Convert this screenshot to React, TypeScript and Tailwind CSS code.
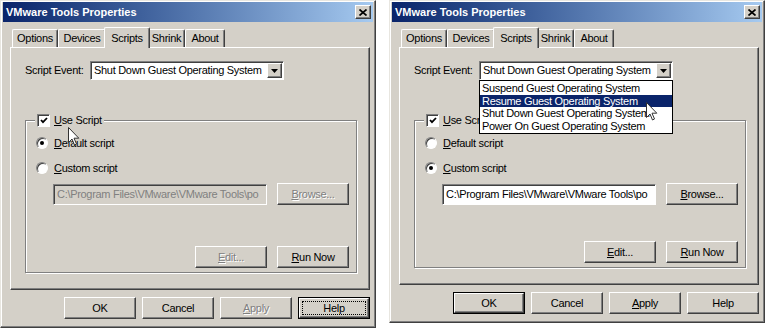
import React from 'react';

const raised =
  'bg-[#d4d0c8] border border-t-white border-l-white border-r-[#404040] border-b-[#404040] shadow-[inset_-1px_-1px_0_#808080]';
const sunken =
  'border border-t-[#808080] border-l-[#808080] border-r-white border-b-white shadow-[inset_1px_1px_0_#404040]';

// label with one underlined accelerator letter
const Label = ({ text, acc }: { text: string; acc?: number }) => {
  if (acc === undefined) return <>{text}</>;
  return (
    <>
      {text.slice(0, acc)}
      <span className="underline underline-offset-[1px]">{text[acc]}</span>
      {text.slice(acc + 1)}
    </>
  );
};

interface ButtonProps {
  text: string;
  acc?: number;
  disabled?: boolean;
  primary?: boolean;
  focused?: boolean;
}

const Button: React.FC<ButtonProps> = ({ text, acc, disabled, primary, focused }) => {
  const tone = disabled ? 'text-[#808080] [text-shadow:1px_1px_0_#ffffff]' : 'text-black';
  return (
    <div className={`w-[72px] h-[22px] flex ${primary || focused ? 'border border-black' : ''}`}>
      <div className={`flex-1 flex ${raised} ${tone} ${focused ? 'p-[2px]' : ''}`}>
        <div
          className={`flex-1 flex items-center justify-center ${focused ? 'border border-dotted border-black' : ''}`}
        >
          <Label text={text} acc={acc} />
        </div>
      </div>
    </div>
  );
};

const Checkbox = () => (
  <div className={`w-[13px] h-[13px] bg-white ${sunken} flex items-center justify-center`}>
    <svg width="8" height="7" viewBox="0 0 8 7">
      <path d="M1 3 L3 5.2 L7 1" stroke="black" strokeWidth="1.8" fill="none" />
    </svg>
  </div>
);

const Radio = ({ checked }: { checked?: boolean }) => (
  <div
    className="w-[12px] h-[12px] rounded-full bg-white border border-t-[#808080] border-l-[#808080] border-r-white border-b-white shadow-[inset_1px_1px_0_#404040] flex items-center justify-center"
  >
    {checked && <div className="w-[4px] h-[4px] rounded-full bg-black" />}
  </div>
);

const Cursor = () => (
  <svg width="12" height="19" viewBox="0 0 12 19">
    <path
      d="M0.5 0.5 L0.5 15.5 L4 12 L6.5 18 L8.5 17 L6 11.2 L10.8 11.2 Z"
      fill="white"
      stroke="#333"
      strokeWidth="1"
    />
  </svg>
);

const Window: React.FC<{ open?: boolean }> = ({ open }) => {
  const options = [
    'Suspend Guest Operating System',
    'Resume Guest Operating System',
    'Shut Down Guest Operating System',
    'Power On Guest Operating System',
  ];
  const tabs: [string, string][] = [
    ['Options', 'w-[46px]'],
    ['Devices', 'w-[48px]'],
    ['Scripts', 'w-[46px]'],
    ['Shrink', 'w-[37px]'],
    ['About', 'w-[40px]'],
  ];

  return (
    <div
      className={`relative flex flex-col bg-[#d4d0c8] border border-t-[#e8e6e0] border-l-[#e8e6e0] border-r-[#404040] border-b-[#404040] shadow-[inset_-1px_-1px_0_#808080,inset_1px_1px_0_#ffffff] ${
        open ? 'w-[376px] h-[323px]' : 'w-[376px] h-[328px]'
      }`}
    >
      {/* title bar */}
      <div className="mx-[2px] mt-[1px] h-[20px] flex items-center justify-between pl-[3px] pr-[2px] bg-linear-to-r from-[#0a246a] to-[#a6caf0]">
        <span className="text-white font-bold text-[11px] tracking-normal">VMware Tools Properties</span>
        <div className={`w-[16px] h-[14px] ${raised} flex items-center justify-center`}>
          <svg width="8" height="7" viewBox="0 0 8 7">
            <path d="M0.5 0.5 L7.5 6.5 M7.5 0.5 L0.5 6.5" stroke="black" strokeWidth="1.7" />
          </svg>
        </div>
      </div>

      <div className="flex-1 flex flex-col pl-[9px] pr-[5px] pt-[5px]">
        {/* tabs */}
        <div className="flex items-end h-[20px] pl-[2px]">
          {tabs.map(([name, w]) =>
            name === 'Scripts' ? (
              <div
                key={name}
                className={`${w} relative z-10 -mx-[2px] -mb-px h-[21px] bg-[#d4d0c8] border-l border-t border-r border-l-white border-t-white border-r-[#404040] rounded-t-[2px] shadow-[inset_-1px_0_0_#808080] flex items-start justify-center pt-[2px]`}
              >
                {name}
              </div>
            ) : (
              <div
                key={name}
                className={`${w} h-[18px] border-l border-t border-r border-l-white border-t-white border-r-[#404040] rounded-t-[2px] shadow-[inset_-1px_0_0_#808080] flex items-center justify-center`}
              >
                {name}
              </div>
            )
          )}
        </div>

        {/* tab page */}
        <div className={`flex-1 flex flex-col ${raised} pl-[14px] pr-[12px] pt-[13px] pb-[16px]`}>
          <div className="flex items-center h-[19px]">
            <span className="w-[65px]">Script Event:</span>
            <div className="relative w-[194px] h-[19px]">
              <div className={`h-full bg-white ${sunken} flex items-center`}>
                <span className="flex-1 pl-[3px] whitespace-nowrap overflow-hidden">
                  Shut Down Guest Operating System
                </span>
                <div className={`w-[15px] h-[15px] mr-px ${raised} flex items-center justify-center`}>
                  <svg width="7" height="4" viewBox="0 0 7 4">
                    <path d="M0 0 H7 L3.5 4 Z" fill="black" />
                  </svg>
                </div>
              </div>
              {open && (
                <div className="absolute left-0 top-full w-full z-20 bg-white border border-black py-px">
                  {options.map((o) => (
                    <div
                      key={o}
                      className={`h-[12.5px] leading-[12.5px] pl-[2px] whitespace-nowrap ${
                        o.startsWith('Resume') ? 'bg-[#0a246a] text-white' : ''
                      }`}
                    >
                      {o}
                    </div>
                  ))}
                </div>
              )}
            </div>
          </div>

          {/* group box */}
          <fieldset className="mt-[33px] flex-1 flex flex-col border border-[#808080] shadow-[inset_1px_1px_0_#ffffff,1px_1px_0_#ffffff] pl-[10px] pr-[7px] pb-[4px]">
            <legend className="-ml-px px-[2px] bg-[#d4d0c8]">
              <div className="flex items-center gap-[4px] h-[14px]">
                <Checkbox />
                <span>
                  <Label text="Use Script" acc={0} />
                </span>
              </div>
            </legend>
            <div className="mt-[9px] flex items-center gap-[6px] h-[14px]">
              <Radio checked={!open} />
              <span>
                <Label text="Default script" acc={0} />
              </span>
            </div>
            <div className="mt-[11px] flex items-center gap-[6px] h-[14px]">
              <Radio checked={open} />
              <span>
                <Label text="Custom script" acc={0} />
              </span>
            </div>
            <div className="mt-[8px] ml-[17px] flex items-center justify-between">
              <div
                className={`w-[214px] h-[21px] ${sunken} flex items-center pl-[3px] whitespace-nowrap overflow-hidden ${
                  open ? 'bg-white text-black' : 'bg-[#d4d0c8] text-[#808080]'
                }`}
              >
                C:\Program Files\VMware\VMware Tools\po
              </div>
              <Button text="Browse..." acc={0} disabled={!open} />
            </div>
            <div className="mt-auto flex justify-end gap-[10px]">
              <Button text="Edit..." acc={0} disabled={!open} />
              <Button text="Run Now" acc={0} />
            </div>
          </fieldset>
        </div>

        {/* dialog buttons */}
        <div className="flex justify-end gap-[6px] mt-[7px] mb-[8px]">
          <Button text="OK" primary={open} />
          <Button text="Cancel" />
          <Button text="Apply" acc={0} disabled={!open} />
          <Button text="Help" focused={!open} />
        </div>
      </div>

      {/* mouse pointer */}
      <div className={`absolute z-30 ${open ? 'left-[256px] top-[101px]' : 'left-[67px] top-[126px]'}`}>
        <Cursor />
      </div>
    </div>
  );
};

export default function App() {
  return (
    <div className="w-[768px] h-[330px] bg-white flex items-start gap-[13px] text-[11px] tracking-[-0.3px] text-black font-['Liberation_Sans',Arial,sans-serif] overflow-hidden">
      <Window />
      <Window open />
    </div>
  );
}
